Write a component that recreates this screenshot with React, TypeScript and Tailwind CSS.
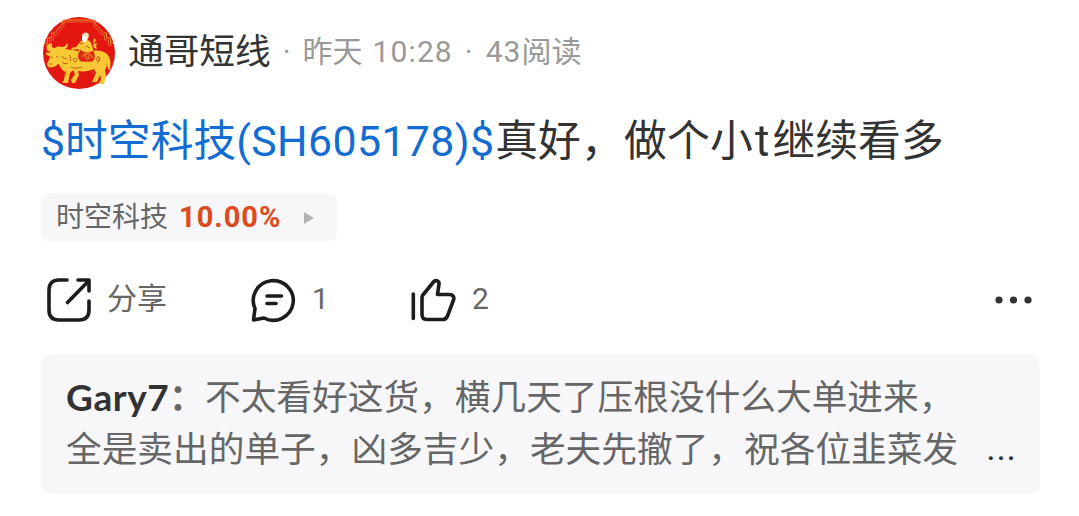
import type { ReactNode } from "react";

interface ActionProps {
  icon: ReactNode;
  label: string;
  className?: string;
}

function Avatar() {
  return (
    <svg viewBox="0 0 74 74" className="size-[74px] shrink-0">
      <circle cx="37" cy="37" r="36" fill="#e31612" />
      <g fill="none" stroke="#f0a03a" strokeWidth="0.9">
        <path d="M2.500 27h3v-5h4v-5h3l8-9V4h33v4l8 9h3v5h4v5h3" />
        <path d="M4 29h3.500v-5h4v-5h2.500l8-9V6h30v4l8 9h2.500v5h4v5H70" strokeWidth="0.6" />
      </g>
      <g fill="#f8c934">
        <path d="M5 29c-1 4 0 6 4 7-2 1-4 0-5 1 0 2 2 3 4 3 0 3-2 5-3 8 0 3 3 4 6 3 3 0 4-3 6-3 1 3 3 6 6 8l-1 8-2 3h6l2-10 3-3 2 4-4 6 1 3h3l4-8-1-4c6 1 11 0 16-2l2 4-4 9h5l3-7 1 4-2 5h5l2-8-1-6c3-5 2-10 0-13 3 5 1 9 4 13h1c1-6 1-13-4-17-5-3-10-3-16-2-9 2-15-1-25-2 2-1 4-3 2-6-1 3-3 4-6 4-3-1-5 0-6 1-2 0-4-1-3-5z" />
        <path d="M41 24c-3 1-5 5-7 7l-5 1 1 2 6-1 2 4 12 1c2-2 1-7-1-11-1-3-5-4-8-3z" />
        <path d="M52 22l2 2-1 2-2 1zM51 28l4-1-1 3 1 3-3-1z" />
      </g>
      <path d="M38 33l-2 5c-1 3 0 6 3 8h11c4-2 4-8 1-12-3 3-8 3-13-1z" fill="#dc2a14" stroke="#f8c934" strokeWidth="1" strokeDasharray="1.400 0.600" />
      <path d="M41 41c-1-3 3-3 3 0s3 3 3 0 4-2 3 1M42 38h6" fill="none" stroke="#f5ae2c" strokeWidth="0.900" />
      <path d="M40 20c0-4 6-5 7-1l-1 4-3 3-3-3z" fill="#fbe3bf" />
      <path d="M40 21l4-1 1 3-2 4-3-3z" fill="#fff" />
      <path d="M9 41l2 1m3-1l2-1M7 48l3 0M20 40c1 3 3 3 5 2m-5 4c2 2 4 2 6 1m1-8c2 1 2 4 1 6m1 6c4 2 8 1 11 0m16-11c2 2 1 6-1 7m-31 8l-1 5m27-5l2 4M38 28l3-1m3 3l4 2" fill="none" stroke="#c85a12" strokeWidth="1" />
      <circle cx="33" cy="44" r="1.800" fill="none" stroke="#c85a12" strokeWidth="0.800" />
      <circle cx="56" cy="43" r="1.800" fill="none" stroke="#c85a12" strokeWidth="0.800" />
    </svg>
  );
}

function ShareIcon() {
  return (
    <svg viewBox="0 0 46 46" className="size-[46px]" fill="none" stroke="#1c1c1c" strokeWidth="3.6" strokeLinecap="round" strokeLinejoin="round">
      <path d="M21 3h-8C6.500 3 3 6.500 3 13v20c0 6.500 3.500 10 10 10h20c6.500 0 10-3.500 10-10v-9" />
      <path d="M21.500 25.500L43 3.500M32 3h11v11" />
    </svg>
  );
}

function CommentIcon() {
  return (
    <svg viewBox="0 0 46 46" className="size-[46px]" fill="none" stroke="#1c1c1c" strokeWidth="3.6" strokeLinecap="round" strokeLinejoin="round">
      <path d="M3.500 43l1.500-11.500A20 19.800 0 1 1 14 41z" />
      <path d="M17 19h14.500M17 26.500h9" />
    </svg>
  );
}

function LikeIcon() {
  return (
    <svg viewBox="0 0 46 46" className="size-[46px]" fill="none" stroke="#1c1c1c" strokeWidth="3.6" strokeLinecap="round" strokeLinejoin="round">
      <path d="M3.300 17v24.500" />
      <path d="M12.500 18.500L23.500 5c2-2.500 6-1 5.500 2l-1.500 10.500h12c3.500 0 5 2.500 4 5.500l-6 16c-1 2.500-2.500 3.500-5 3.500H17c-3.500 0-5-1.500-5-5V21c0-1 0-1.800.5-2.500z" />
    </svg>
  );
}

function Action({ icon, label, className = "" }: ActionProps) {
  return (
    <div className={`flex items-center ${className}`}>
      {icon}
      <span className="pb-[3px] leading-[43px]">{label}</span>
    </div>
  );
}

export default function App() {
  return (
    <div className="h-[516px] w-[1079px] overflow-hidden bg-white pt-4 pr-[39px] pl-[41px] font-[Roboto,'Noto_Sans_CJK_SC',sans-serif] whitespace-nowrap">
      <header className="flex h-[74px] items-center pl-px">
        <Avatar />
        <span className="ml-3 text-[35.7px] text-[#333]">通哥短线</span>
        <div className="flex items-center pb-1 text-[30px] text-[#999]">
          <span className="ml-[12px]">·</span>
          <span className="ml-[12px]">昨天</span>
          <span className="ml-[10px] tracking-[1.1px]">10:28</span>
          <span className="ml-[12px]">·</span>
          <span className="ml-[13px]">
            <span className="tracking-[1px]">43</span>阅读
          </span>
        </div>
      </header>

      <p className="mt-[19px] flex h-[64px] items-center text-[42.8px] text-[#333]">
        <span className="text-[#126dd3]">
          $时空科技<span className="tracking-[0.4px]">(SH605178)</span>$
        </span>
        <span className="ml-px tracking-[0.2px]">真好，做个小</span>
        <span className="mr-[3px] ml-[2px] text-[44px]">t</span>
        <span>继续看多</span>
      </p>

      <div className="mt-[20px] flex h-[49px] w-[296px] items-center rounded-[10px] bg-[#f7f7fa] pl-[15px] text-[28px] text-[#666]">
        <span>时空科技</span>
        <span className="ml-[11px] text-[29px] font-bold tracking-[1px] text-[#dd4a1b]">10.00%</span>
        <svg viewBox="0 0 10 12" className="ml-[23px] h-3 w-[10px]">
          <path d="M0 0l10 6-10 6z" fill="#b3b3b3" />
        </svg>
      </div>

      <div className="mt-[35px] flex h-[46px] items-center text-[30px] text-[#666]">
        <Action icon={<ShareIcon />} label="分享" className="ml-[5px] gap-[15px]" />
        <Action icon={<CommentIcon />} label="1" className="ml-[83px] gap-[16px]" />
        <Action icon={<LikeIcon />} label="2" className="ml-[81px] gap-[16px]" />
        <svg viewBox="0 0 38 8" className="mr-[7px] ml-auto h-2 w-[38px]" fill="#333">
          <circle cx="4" cy="4" r="3.600" />
          <circle cx="18.500" cy="4" r="3.600" />
          <circle cx="33" cy="4" r="3.600" />
        </svg>
      </div>

      <section className="mt-[31px] h-[140px] rounded-[10px] bg-[#f7f7fa] pt-[19px] pl-[25px] text-[35.7px] leading-[51px] text-[#666]">
        <p className="flex">
          <span className="-mt-[2px] w-[103px] font-[Lato] text-[37px] font-bold tracking-[0.6px] text-[#333]">Gary7</span>
          <span className="w-9 font-bold">：</span>
          <span>不太看好这货，横几天了压根没什么大单进来，</span>
        </p>
        <div className="flex pt-px">
          <span>全是卖出的单子，凶多吉少，老夫先撤了，祝各位韭菜发</span>
          <span className="-mt-[2px] ml-7 tracking-[0.8px] text-[#333]">...</span>
        </div>
      </section>
    </div>
  );
}
